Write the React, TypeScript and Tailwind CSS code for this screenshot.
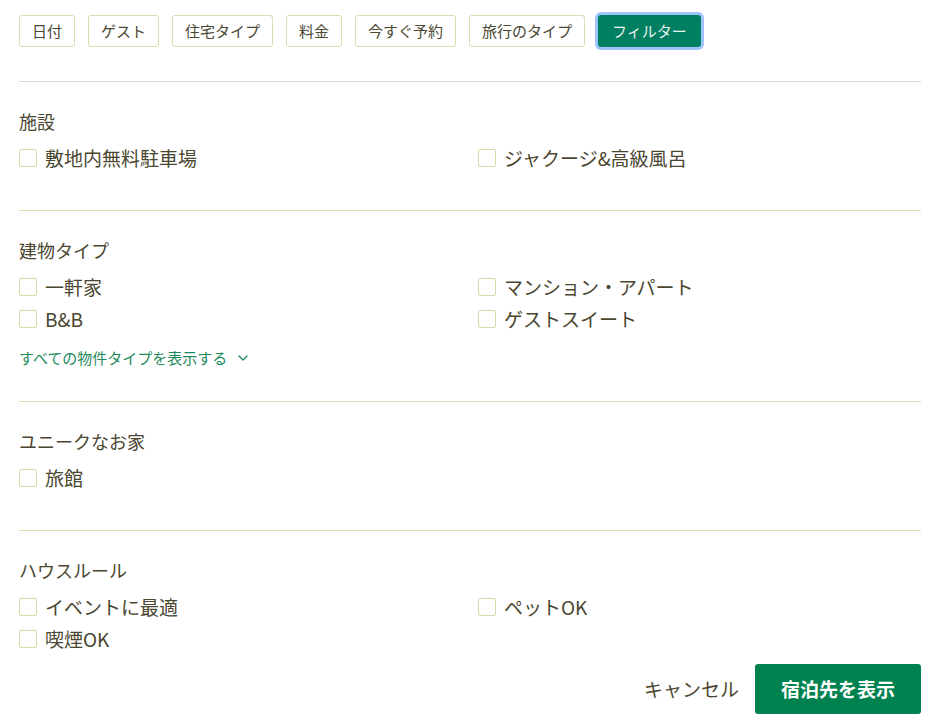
import { ChevronDown } from "lucide-react";

const font = { fontFamily: '"Noto Sans CJK JP", "Noto Sans", sans-serif' };

const tabs = ["日付", "ゲスト", "住宅タイプ", "料金", "今すぐ予約", "旅行のタイプ"];

type Section = {
  title: string;
  items: string[];
  more?: string;
};

const sections: Section[] = [
  { title: "施設", items: ["敷地内無料駐車場", "ジャクージ&高級風呂"] },
  {
    title: "建物タイプ",
    items: ["一軒家", "マンション・アパート", "B&B", "ゲストスイート"],
    more: "すべての物件タイプを表示する",
  },
  { title: "ユニークなお家", items: ["旅館"] },
  { title: "ハウスルール", items: ["イベントに最適", "ペットOK", "喫煙OK"] },
];

function Check({ label }: { label: string }) {
  return (
    <label className="flex h-8 items-center gap-2 cursor-pointer">
      <span className="h-[18px] w-[18px] rounded-[2px] border border-[#d9d9a8] bg-white" />
      <span className="text-[19px] text-[#4a4630]">{label}</span>
    </label>
  );
}

export default function App() {
  return (
    <div className="min-h-screen bg-white pl-[19px] pr-[12px] pt-[15px]" style={font}>
      {/* TOP FILTER TABS */}
      <div className="flex items-center gap-[13px]">
        {tabs.map((t) => (
          <button
            key={t}
            className="h-8 rounded-[3px] border border-[#dcdcb0] bg-white px-3 text-[15px] text-[#4a4630]"
          >
            {t}
          </button>
        ))}
        <button className="h-8 rounded-[3px] bg-[#007f62] px-[14px] text-[15px] text-[#e6f2ea] ring-[3px] ring-[#9fc3fa]">
          フィルター
        </button>
      </div>

      <div className="mt-[34px] border-t border-[#dadacc]" />

      {sections.map((s, i) => (
        <div
          key={s.title}
          className={i > 0 ? "border-t border-[#dfdfb0] pt-[25px]" : "pt-[25px]"}
        >
          <h3 className="h-7 text-[18px] leading-7 text-[#4a4630]">{s.title}</h3>
          <div className="mt-[7px] grid grid-cols-2 gap-x-4">
            {s.items.map((it) => (
              <Check key={it} label={it} />
            ))}
          </div>
          {s.more && (
            <button className="mt-[12px] flex items-center gap-2 text-[15px] leading-[22px] text-[#1d8a5c]">
              {s.more}
              <ChevronDown size={16} strokeWidth={2} />
            </button>
          )}
          <div className={i === sections.length - 1 ? "h-[9px]" : s.more ? "h-[32px]" : "h-[36px]"} />
        </div>
      ))}

      {/* FOOTER */}
      <div className="flex items-center justify-end gap-4">
        <button className="text-[19px] text-[#4a4630]">キャンセル</button>
        <button className="h-[50px] w-[166px] rounded-[3px] bg-[#008150] text-[19px] font-bold text-white">
          宿泊先を表示
        </button>
      </div>
    </div>
  );
}
